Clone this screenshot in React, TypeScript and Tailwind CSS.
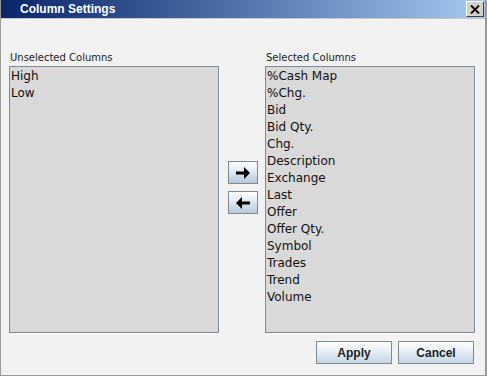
import React from "react";

const unselected = ["High", "Low"];
const selected = [
  "%Cash Map",
  "%Chg.",
  "Bid",
  "Bid Qty.",
  "Chg.",
  "Description",
  "Exchange",
  "Last",
  "Offer",
  "Offer Qty.",
  "Symbol",
  "Trades",
  "Trend",
  "Volume",
];

function ColumnList({ label, items }: { label: string; items: string[] }) {
  return (
    <div className="flex flex-col w-[210px]">
      <div className="h-[15px] text-[10px] leading-[14px] text-[#222] pl-[1px]">{label}</div>
      <div className="h-[267px] bg-[#d9d9d9] border border-[#7a8a99] shadow-[1px_1px_0_#ffffff] pl-[1px] pt-[1px]">
        {items.map((item) => (
          <div key={item} className="h-[17px] leading-[17px] text-[12px] text-[#111]">
            {item}
          </div>
        ))}
      </div>
    </div>
  );
}

function ArrowButton({ dir }: { dir: "right" | "left" }) {
  return (
    <button className="w-[30px] h-[23px] border border-[#7a8a99] bg-gradient-to-b from-[#ffffff] via-[#dde6ef] to-[#b8c8d8] flex items-center justify-center">
      <svg width="16" height="14" viewBox="0 0 16 14" className={dir === "left" ? "rotate-180" : ""}>
        <path d="M1 5.5h8V1l6 6-6 6V8.5H1z" fill="#000" />
      </svg>
    </button>
  );
}

function DialogButton({ children }: { children: React.ReactNode }) {
  return (
    <button className="w-[76px] h-[23px] border border-[#7a8a99] bg-gradient-to-b from-[#ffffff] via-[#e4ecf4] to-[#c4d4e6] text-[12px] font-bold text-[#222] font-['Liberation_Sans',sans-serif]">
      {children}
    </button>
  );
}

export default function App() {
  return (
    <div className="w-[487px] h-[376px] flex flex-col bg-[#f2f2f2] border-l border-r-2 border-b border-[#9a9a9a] font-['DejaVu_Sans',sans-serif] overflow-hidden">
      {/* Title bar */}
      <div className="h-[19px] flex items-center justify-between bg-gradient-to-r from-[#0a246a] to-[#a6caf0] pl-[19px] pr-[1px] border-b border-[#c8c8c8]">
        <span className="text-white text-[12px] font-bold font-['Liberation_Sans',sans-serif]">Column Settings</span>
        <div className="w-[18px] h-[16px] bg-[#d4d0c8] border border-t-white border-l-white border-r-[#404040] border-b-[#404040] flex items-center justify-center">
          <svg width="10" height="9" viewBox="0 0 10 9">
            <path d="M1 0.5l8 8M9 0.5l-8 8" stroke="#000" strokeWidth="1.9" />
          </svg>
        </div>
      </div>

      {/* Lists */}
      <div className="flex pl-[8px] pt-[32px]">
        <ColumnList label="Unselected Columns" items={unselected} />
        <div className="w-[46px] flex flex-col items-center gap-[7px] pt-[110px] pl-[2px]">
          <ArrowButton dir="right" />
          <ArrowButton dir="left" />
        </div>
        <ColumnList label="Selected Columns" items={selected} />
      </div>

      {/* Buttons */}
      <div className="flex justify-end gap-[6px] pr-[11px] pt-[8px]">
        <DialogButton>Apply</DialogButton>
        <DialogButton>Cancel</DialogButton>
      </div>
    </div>
  );
}
